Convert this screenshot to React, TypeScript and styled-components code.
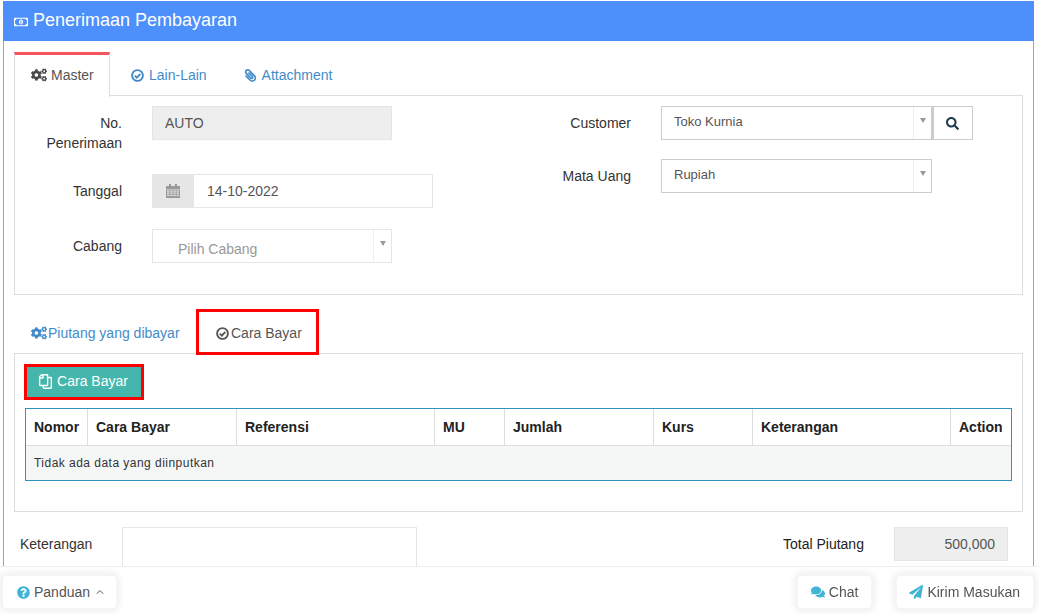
import styled, { createGlobalStyle } from 'styled-components';
import {
  FaCogs,
  FaComments,
  FaPaperclip,
  FaPaperPlane,
  FaQuestionCircle,
  FaRegCopy,
  FaRegMoneyBillAlt,
  FaSearch
} from 'react-icons/fa';
import { FiChevronUp } from 'react-icons/fi';

const columns = [
  { title: 'Nomor', width: 62 },
  { title: 'Cara Bayar', width: 149 },
  { title: 'Referensi', width: 198 },
  { title: 'MU', width: 70 },
  { title: 'Jumlah', width: 149 },
  { title: 'Kurs', width: 99 },
  { title: 'Keterangan', width: 198 },
  { title: 'Action', width: 60 }
];

const CheckIcon = () => (
  <svg width="13" height="13" viewBox="0 0 13 13" fill="none" stroke="currentColor">
    <circle cx="6.5" cy="6.5" r="5.4" strokeWidth="1.9" />
    <path d="M3.8 6.6 L5.8 8.6 L9.3 5" strokeWidth="1.8" />
  </svg>
);

const CalendarIcon = () => (
  <svg width="14" height="14" viewBox="0 0 14 14" fill="currentColor">
    <rect x="0" y="2" width="14" height="3" />
    <rect x="3" y="0" width="2" height="3" />
    <rect x="9" y="0" width="2" height="3" />
    <path d="M0 5.5h14V14H0z M1 6.5v1.2h2.4V6.5z M4.2 6.5v1.2h2.4V6.5z M7.4 6.5v1.2h2.4V6.5z M10.6 6.5v1.2H13V6.5z M1 8.6v1.2h2.4V8.6z M4.2 8.6v1.2h2.4V8.6z M7.4 8.6v1.2h2.4V8.6z M10.6 8.6v1.2H13V8.6z M1 10.8V12h2.4v-1.2z M4.2 10.8V12h2.4v-1.2z M7.4 10.8V12h2.4v-1.2z M10.6 10.8V12H13v-1.2z" fillRule="evenodd" />
  </svg>
);

const App = () => {
  return (
    <>
      <GlobalStyle />
      <Panel>
        <PanelHeader>
          <FaRegMoneyBillAlt />
          <PanelTitle>Penerimaan Pembayaran</PanelTitle>
        </PanelHeader>

        <PanelBody>
          <MainTabs>
            <ActiveMainTab>
              <FaCogs />
              Master
            </ActiveMainTab>
            <MainTab>
              <CheckIcon />
              Lain-Lain
            </MainTab>
            <MainTab>
              <FlippedClip />
              Attachment
            </MainTab>
          </MainTabs>

          <MasterBox>
            <FormColumn $width={516}>
              <FormRow $height={68}>
                <FieldLabel $width={107}>No. Penerimaan</FieldLabel>
                <ReadonlyInput $width={240}>AUTO</ReadonlyInput>
              </FormRow>
              <FormRow $height={55}>
                <FieldLabel $width={107}>Tanggal</FieldLabel>
                <DateGroup>
                  <DateAddon>
                    <CalendarIcon />
                  </DateAddon>
                  <DateValue>14-10-2022</DateValue>
                </DateGroup>
              </FormRow>
              <FormRow $height={34}>
                <FieldLabel $width={107}>Cabang</FieldLabel>
                <SelectBox $width={240} $light>
                  <PlaceholderText>Pilih Cabang</PlaceholderText>
                  <SelectArrow />
                </SelectBox>
              </FormRow>
            </FormColumn>

            <FormColumn $width={450}>
              <FormRow $height={53}>
                <FieldLabel $width={100}>Customer</FieldLabel>
                <SelectBox $width={271}>
                  <SelectText>Toko Kurnia</SelectText>
                  <SelectArrow />
                </SelectBox>
                <SearchButton>
                  <FaSearch />
                </SearchButton>
              </FormRow>
              <FormRow $height={34}>
                <FieldLabel $width={100}>Mata Uang</FieldLabel>
                <SelectBox $width={271}>
                  <SelectText>Rupiah</SelectText>
                  <SelectArrow />
                </SelectBox>
              </FormRow>
            </FormColumn>
          </MasterBox>

          <SubTabs>
            <SubTab>
              <FaCogs />
              Piutang yang dibayar
            </SubTab>
            <SubTabMarked>
              <CheckIcon />
              Cara Bayar
            </SubTabMarked>
          </SubTabs>

          <PaymentBox>
            <MarkedButton>
              <AddButton>
                <FlippedCopy />
                Cara Bayar
              </AddButton>
            </MarkedButton>

            <PaymentTable>
              <thead>
                <tr>
                  {columns.map(col => (
                    <HeadCell key={col.title} $width={col.width}>
                      {col.title}
                    </HeadCell>
                  ))}
                </tr>
              </thead>
              <tbody>
                <tr>
                  <EmptyCell colSpan={columns.length}>Tidak ada data yang diinputkan</EmptyCell>
                </tr>
              </tbody>
            </PaymentTable>
          </PaymentBox>

          <SummaryRow>
            <NoteLabel>Keterangan</NoteLabel>
            <NoteArea />
            <TotalLabel>Total Piutang</TotalLabel>
            <TotalValue>500,000</TotalValue>
          </SummaryRow>
        </PanelBody>
      </Panel>

      <FooterBar>
        <GuideButton>
          <FaQuestionCircle />
          Panduan
          <FiChevronUp className="caret" />
        </GuideButton>
        <FooterRight>
          <FooterButton>
            <FaComments />
            Chat
          </FooterButton>
          <SendButton>
            <FaPaperPlane />
            Kirim Masukan
          </SendButton>
        </FooterRight>
      </FooterBar>
    </>
  );
};

const GlobalStyle = createGlobalStyle`
  html, body {
    margin: 0;
    height: 100%;
    overflow: hidden;
    background: white;
  }

  body {
    font-family: "Liberation Sans", Arial, sans-serif;
    font-size: 14px;
    color: #333;
  }

  * {
    box-sizing: border-box;
  }
`;

const Panel = styled.div`
  width: 1031px;
  height: 640px;
  margin: 1px 0 0 3px;
  border-left: 1px solid #7fa8ea;
  border-right: 1px solid #7fa8ea;
`;

const PanelHeader = styled.div`
  height: 40px;
  margin: 0 -1px;
  padding: 0 11px 2px;
  display: flex;
  align-items: center;
  gap: 5px;
  background: #4d8ffb;
  color: white;

  svg {
    font-size: 14px;
    margin-top: 4px;
  }
`;

const PanelTitle = styled.span`
  font-size: 18px;
`;

const PanelBody = styled.div`
  padding: 11px 10px 0;
`;

const MainTabs = styled.div`
  display: flex;
  height: 44px;
  position: relative;
  z-index: 1;
`;

const MainTab = styled.div`
  height: 45px;
  margin-right: 5px;
  padding: 0 16px 2px;
  display: flex;
  align-items: center;
  gap: 5px;
  color: #428bca;
  border-top: 3px solid transparent;
`;

const ActiveMainTab = styled(MainTab)`
  width: 96px;
  gap: 4px;
  color: #555;
  background: white;
  border-top-color: #f6545f;
  border-left: 1px solid #ddd;
  border-right: 1px solid #ddd;

  svg {
    font-size: 16px;
    flex-shrink: 0;
    color: #4a4a4a;
  }
`;

const FlippedClip = styled(FaPaperclip)`
  font-size: 13px;
  transform: scaleX(-1);
`;

const MasterBox = styled.div`
  height: 200px;
  margin-top: -1px;
  padding-top: 10px;
  display: flex;
  border: 1px solid #ddd;
`;

const FormColumn = styled.div<{ $width: number }>`
  width: ${props => props.$width}px;
`;

const FormRow = styled.div<{ $height: number }>`
  height: ${props => props.$height}px;
  display: flex;
  align-items: flex-start;
`;

const FieldLabel = styled.div<{ $width: number }>`
  width: ${props => props.$width}px;
  margin-right: 30px;
  padding: 7px 0 0 15px;
  line-height: 20px;
  text-align: right;
`;

const ReadonlyInput = styled.div<{ $width: number }>`
  width: ${props => props.$width}px;
  height: 34px;
  padding: 0 12px;
  display: flex;
  align-items: center;
  background: #eee;
  border: 1px solid #e5e6e7;
  color: #555;
`;

const DateGroup = styled.div`
  width: 281px;
  height: 34px;
  display: flex;
`;

const DateAddon = styled.div`
  width: 42px;
  display: flex;
  align-items: center;
  justify-content: center;
  background: #e6e6e6;
  color: #999;
`;

const DateValue = styled.div`
  flex: 1;
  padding-left: 13px;
  display: flex;
  align-items: center;
  border: 1px solid #e5e6e7;
  border-left: none;
  color: #555;
`;

const SelectBox = styled.div<{ $width: number; $light?: boolean }>`
  width: ${props => props.$width}px;
  height: 34px;
  display: flex;
  border: 1px solid ${props => (props.$light ? '#e5e6e7' : '#ccc')};
`;

const SelectText = styled.div`
  flex: 1;
  padding: 6px 0 0 12px;
  font-size: 13px;
  line-height: 17px;
  color: #555;
`;

const PlaceholderText = styled.div`
  flex: 1;
  padding: 11px 0 0 25px;
  line-height: 17px;
  color: #999;
`;

const SelectArrow = styled.div`
  width: 18px;
  border-left: 1px solid #eee;
  position: relative;

  &::after {
    content: '';
    position: absolute;
    top: 11px;
    left: 6px;
    border-top: 5px solid #999;
    border-left: 3px solid transparent;
    border-right: 3px solid transparent;
  }
`;

const SearchButton = styled.div`
  width: 41px;
  height: 34px;
  padding-right: 2px;
  display: flex;
  align-items: center;
  justify-content: center;
  border: 1px solid #ccc;
  border-left-width: 2px;
  color: #1f3a4d;
  font-size: 13px;
`;

const SubTabs = styled.div`
  height: 44px;
  margin-top: 14px;
  display: flex;
  position: relative;
  z-index: 1;
`;

const SubTab = styled.div`
  height: 44px;
  width: 182px;
  padding: 4px 0 0 17px;
  display: flex;
  align-items: center;
  gap: 1px;
  color: #428bca;

  svg {
    font-size: 16px;
  }
`;

const SubTabMarked = styled.div`
  width: 123px;
  height: 46px;
  padding: 2px 0 0 17px;
  display: flex;
  align-items: center;
  gap: 2px;
  border: 3px solid #f00;
  background: white;
  color: #555;
`;

const PaymentBox = styled.div`
  height: 159px;
  padding: 10px;
  border: 1px solid #ddd;
`;

const MarkedButton = styled.div`
  width: 120px;
  height: 36px;
  margin-left: -1px;
  border: 3px solid #f00;
`;

const AddButton = styled.div`
  height: 100%;
  padding: 0 2px 2px 0;
  display: flex;
  align-items: center;
  justify-content: center;
  gap: 4px;
  background: #45b6ac;
  color: white;
`;

const FlippedCopy = styled(FaRegCopy)`
  font-size: 15px;
  transform: scaleX(-1);
`;

const PaymentTable = styled.table`
  width: 987px;
  margin-top: 8px;
  table-layout: fixed;
  border-collapse: separate;
  border-spacing: 0;
  border: 1px solid #2e93c0;
`;

const HeadCell = styled.th<{ $width: number }>`
  width: ${props => props.$width}px;
  height: 37px;
  padding: 0 8px;
  text-align: left;
  font-size: 14px;
  color: #222;
  border-bottom: 1px solid #ddd;
  border-right: 1px solid #ddd;
  white-space: nowrap;

  &:last-child {
    border-right: none;
  }
`;

const EmptyCell = styled.td`
  height: 34px;
  padding: 0 8px;
  font-size: 12px;
  letter-spacing: 0.47px;
  background: #f5f7f7;
  color: #333;
`;

const SummaryRow = styled.div`
  margin-top: 15px;
  padding-left: 6px;
  display: flex;
  align-items: flex-start;
`;

const NoteLabel = styled.div`
  width: 102px;
  padding-top: 7px;
  line-height: 20px;
`;

const NoteArea = styled.div`
  width: 295px;
  height: 60px;
  border: 1px solid #e5e6e7;
`;

const TotalLabel = styled.div`
  width: 111px;
  margin-left: 366px;
  padding-top: 7px;
  line-height: 20px;
  color: #222;
`;

const TotalValue = styled.div`
  width: 114px;
  height: 34px;
  padding-right: 12px;
  display: flex;
  align-items: center;
  justify-content: flex-end;
  background: #eee;
  border: 1px solid #e5e6e7;
  color: #555;
`;

const FooterBar = styled.div`
  position: fixed;
  left: 0;
  right: 0;
  bottom: 0;
  height: 48px;
  padding: 9px 6px 6px 3px;
  display: flex;
  justify-content: space-between;
  background: white;
  border-top: 1px solid #eee;
`;

const FooterRight = styled.div`
  display: flex;
  gap: 26px;
`;

const FooterButton = styled.div`
  height: 32px;
  padding: 0 13px;
  display: flex;
  align-items: center;
  gap: 4px;
  background: white;
  border-radius: 4px;
  color: #555;
  box-shadow: 0 0 0 1px #f6f6f6, 0 0 6px 4px #f0f0f0;

  svg {
    font-size: 14px;
    flex-shrink: 0;
    color: #3fb5d3;
  }
`;

const SendButton = styled(FooterButton)`
  padding-left: 12px;
`;

const GuideButton = styled(FooterButton)`
  padding: 0 10px 0 14px;

  svg:first-child {
    font-size: 13px;
  }

  svg.caret {
    font-size: 12px;
    color: #555;
  }
`;

export default App;
